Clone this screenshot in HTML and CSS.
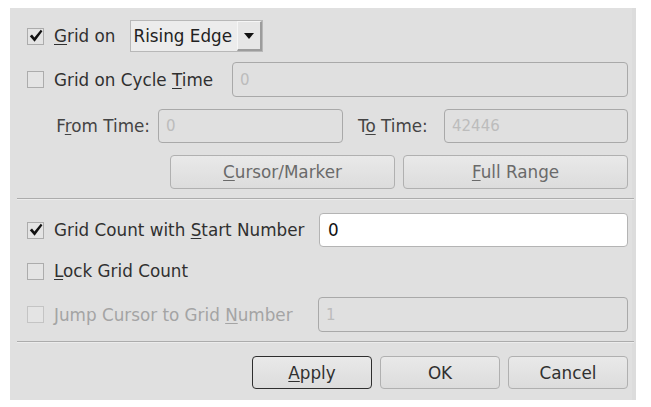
FILE: index.html
```html
<!DOCTYPE html>
<html>
<head>
<meta charset="utf-8">
<link rel="stylesheet" href="styles.css">
</head>
<body>
<div class="dialog">
  <div class="row r1">
    <span class="cb"><svg width="14" height="14" viewBox="0 0 14 14"><path d="M0.8 7.2 L3 5.4 L5.4 8.6 L11.8 0.8 L13.4 2.2 L5.6 12.8 Z" fill="#111"/></svg></span>
    <span class="lbl"><u>G</u>rid on</span>
    <div class="combo">
      <span class="combo-text">Rising Edge</span>
      <span class="combo-btn"><svg width="10" height="6" viewBox="0 0 10 6"><path d="M0 0 H10 L5 6 Z" fill="#111"/></svg></span>
    </div>
  </div>
  <div class="row r2">
    <span class="cb"></span>
    <span class="lbl">Grid on Cycle <u>T</u>ime</span>
    <div class="input disabled w-cycle">0</div>
  </div>
  <div class="row r3">
    <span class="lbl sub from">F<u>r</u>om Time:</span>
    <div class="input disabled w-from">0</div>
    <span class="lbl sub to">T<u>o</u> Time:</span>
    <div class="input disabled w-to">42446</div>
  </div>
  <div class="row r4">
    <button class="btn wide dim"><u>C</u>ursor/Marker</button>
    <button class="btn wide dim"><u>F</u>ull Range</button>
  </div>
  <div class="sep s1"></div>
  <div class="row r5">
    <span class="cb"><svg width="14" height="14" viewBox="0 0 14 14"><path d="M0.8 7.2 L3 5.4 L5.4 8.6 L11.8 0.8 L13.4 2.2 L5.6 12.8 Z" fill="#111"/></svg></span>
    <span class="lbl">Grid Count with <u>S</u>tart Number</span>
    <div class="input enabled w-start">0</div>
  </div>
  <div class="row r6">
    <span class="cb"></span>
    <span class="lbl"><u>L</u>ock Grid Count</span>
  </div>
  <div class="row r7">
    <span class="cb off"></span>
    <span class="lbl off">Jump Cursor to Grid <u>N</u>umber</span>
    <div class="input disabled w-jump">1</div>
  </div>
  <div class="sep s2"></div>
  <div class="row actions">
    <button class="btn act default"><u>A</u>pply</button>
    <button class="btn act">OK</button>
    <button class="btn act">Cancel</button>
  </div>
</div>
</body>
</html>
```
FILE: styles.css
```css
html, body {
  margin: 0;
  background: #ffffff;
}
body {
  font-family: "DejaVu Sans", "Verdana", sans-serif;
  font-size: 16.8px;
  color: #303030;
}
.dialog {
  margin: 8px 0 0 10px;
  width: 626px;
  height: 392px;
  box-sizing: border-box;
  padding: 0 8px 0 7px;
  background: #e0e0e0;
  box-shadow: inset -4px 0 0 #dcdcdc;
  display: flex;
  flex-direction: column;
}
.row {
  display: flex;
  align-items: center;
  padding-left: 10px;
}
u {
  text-decoration-thickness: 1px;
  text-underline-offset: 2px;
}
.lbl {
  white-space: nowrap;
}
.lbl.off {
  color: #a4a4a4;
}
.cb {
  width: 17px;
  height: 17px;
  box-sizing: border-box;
  border: 1px solid #acacac;
  background: #e4e4e4;
  display: flex;
  align-items: center;
  justify-content: center;
  margin-right: 10px;
  flex: none;
}
.cb.off {
  border-color: #c4c4c4;
}
.r1 { margin-top: 12px; height: 32px; }
.r2 { margin-top: 10px; height: 35px; }
.r3 { margin-top: 12px; height: 34px; }
.r4 { margin-top: 12px; height: 34px; justify-content: flex-end; gap: 8px; }
.r5 { margin-top: 13px; height: 34px; }
.r6 { margin-top: 7px; height: 34px; }
.r7 { margin-top: 9px; height: 35px; }
.actions { margin-top: 13px; height: 33px; justify-content: flex-end; gap: 8px; }

.combo {
  margin-left: 15px;
  width: 133px;
  height: 32px;
  box-sizing: border-box;
  border: 1px solid #b8b8b8;
  background: #ececec;
  display: flex;
  align-items: center;
}
.combo-text {
  flex: 1;
  padding-left: 2px;
  color: #222222;
}
.combo-btn {
  width: 25px;
  height: 30px;
  box-sizing: border-box;
  border-left: 1px solid #f6f6f6;
  border-top: 1px solid #f6f6f6;
  border-right: 2px solid #9c9c9c;
  border-bottom: 2px solid #9c9c9c;
  background: #e6e6e6;
  display: flex;
  align-items: center;
  justify-content: center;
}

.input {
  height: 100%;
  box-sizing: border-box;
  border: 1px solid #a9a9a9;
  border-radius: 4px;
  display: flex;
  align-items: center;
  padding-left: 7px;
}
.input.disabled {
  background: #e0e0e0;
  color: #bcbcbc;
  font-size: 15px;
}
.input.enabled {
  background: #ffffff;
  color: #111111;
  border-color: #b4b4b4;
  padding-left: 8px;
}
.w-cycle { margin-left: auto; width: 396px; }
.w-from { margin-left: 8px; width: 185px; }
.w-to { margin-left: auto; width: 184px; }
.w-start { margin-left: auto; width: 309px; }
.w-jump { margin-left: auto; width: 310px; }

.lbl.sub {
  color: #444444;
}
.lbl.from {
  width: 123px;
  text-align: right;
}
.lbl.to {
  margin-left: 15px;
}

.sep {
  height: 0;
  border-top: 1px solid #acacac;
  border-bottom: 1px solid #ececec;
  margin-right: -6px;
}
.s1 { margin-top: 9px; }
.s2 { margin-top: 9px; }

.btn {
  height: 100%;
  box-sizing: border-box;
  border: 1px solid #b0b0b0;
  border-radius: 4px;
  background: linear-gradient(#e9e9e9, #dcdcdc);
  font: inherit;
  color: #303030;
  padding: 0;
}
.btn.wide { width: 225px; }
.btn.dim { color: #6a6a6a; }
.btn.act { width: 120px; }
.btn.default {
  border-color: #2e2e2e;
}
```
